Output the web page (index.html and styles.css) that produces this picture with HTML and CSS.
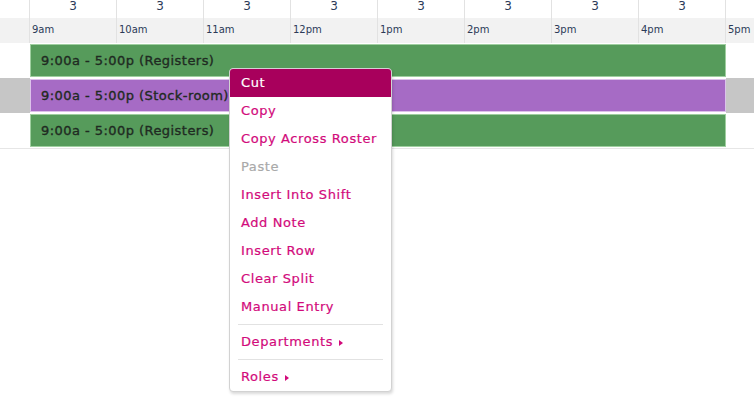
FILE: index.html
```html
<!DOCTYPE html>
<html lang="en">
<head>
  <meta charset="UTF-8">
  <meta name="viewport" content="width=device-width, initial-scale=1.0">
  <title>Roster</title>
  <link rel="stylesheet" href="styles.css">
</head>
<body>
  <div class="roster">
    <div class="row counts">
      <div class="gutter"></div>
      <div class="cell">3</div>
      <div class="cell">3</div>
      <div class="cell">3</div>
      <div class="cell">3</div>
      <div class="cell">3</div>
      <div class="cell">3</div>
      <div class="cell">3</div>
      <div class="cell">3</div>
      <div class="cell tail"></div>
    </div>
    <div class="row hours">
      <div class="gutter"></div>
      <div class="cell">9am</div>
      <div class="cell">10am</div>
      <div class="cell">11am</div>
      <div class="cell">12pm</div>
      <div class="cell">1pm</div>
      <div class="cell">2pm</div>
      <div class="cell">3pm</div>
      <div class="cell">4pm</div>
      <div class="cell tail">5pm</div>
    </div>

    <div class="shift-row">
      <div class="gutter"></div>
      <div class="track"><div class="bar green">9:00a - 5:00p (Registers)</div></div>
      <div class="tail"></div>
    </div>
    <div class="shift-row selected">
      <div class="gutter"></div>
      <div class="track"><div class="bar purple">9:00a - 5:00p (Stock-room)</div></div>
      <div class="tail"></div>
    </div>
    <div class="shift-row">
      <div class="gutter"></div>
      <div class="track"><div class="bar green">9:00a - 5:00p (Registers)</div></div>
      <div class="tail"></div>
    </div>
  </div>

  <ul class="menu">
    <li class="active">Cut</li>
    <li>Copy</li>
    <li>Copy Across Roster</li>
    <li class="disabled">Paste</li>
    <li>Insert Into Shift</li>
    <li>Add Note</li>
    <li>Insert Row</li>
    <li>Clear Split</li>
    <li>Manual Entry</li>
    <li class="sep"></li>
    <li class="sub">Departments</li>
    <li class="sep"></li>
    <li class="sub">Roles</li>
  </ul>
</body>
</html>
```

FILE: styles.css
```css
body {
  margin: 0;
  background: #fff;
  font-family: 'DejaVu Sans', sans-serif;
  overflow: hidden;
}
.roster {
  width: 754px;
}
.row {
  display: flex;
}
.gutter {
  flex: 0 0 29px;
}
.cell {
  flex: 0 0 86px;
  border-left: 1px solid #e2e2e2;
}
.cell.tail {
  flex: 1;
}
.counts {
  height: 18px;
  line-height: 12px;
  font-size: 12px;
  color: #2b3a58;
  text-align: center;
}
.hours {
  height: 25px;
  background: #f2f2f2;
  font-size: 10px;
  color: #2b3a58;
}
.hours .cell {
  padding-left: 2px;
  flex-basis: 84px;
  line-height: 23px;
}
.hours .cell.tail {
  flex: 1;
}
.shift-row {
  display: flex;
  height: 35px;
}
.shift-row:last-child {
  border-bottom: 1px solid #e6e6e6;
}
.shift-row .gutter {
  flex: 0 0 30px;
}
.track {
  flex: 0 0 696px;
  padding: 1px 0;
  box-sizing: border-box;
}
.shift-row .tail {
  flex: 1;
}
.selected .gutter, .selected .tail {
  background: #c6c6c6;
}
.bar {
  height: 100%;
  box-sizing: border-box;
  padding-left: 10px;
  font-size: 13px;
  letter-spacing: 0.45px;
  -webkit-text-stroke: 0.35px #1f2a22;
  color: #1f2a22;
  line-height: 31px;
  white-space: nowrap;
  overflow: hidden;
}
.green {
  background: #569b5b;
  border: 1px solid #9fcfa0;
}
.purple {
  background: #a66bc5;
  border: 1px solid #dcc2ea;
}
.menu {
  position: absolute;
  left: 229px;
  top: 68px;
  width: 161px;
  margin: 0;
  padding: 0;
  list-style: none;
  background: #fff;
  border: 1px solid #d2d2d2;
  border-radius: 4px;
  box-shadow: 1px 2px 3px rgba(0, 0, 0, 0.15);
}
.menu li {
  height: 28px;
  line-height: 28px;
  padding-left: 11px;
  font-size: 13px;
  letter-spacing: 0.6px;
  -webkit-text-stroke: 0.2px currentColor;
  color: #d20a7b;
  white-space: nowrap;
}
.menu li.active {
  background: #a8005c;
  color: #fff;
  border-radius: 3px 3px 0 0;
}
.menu li.disabled {
  color: #a9a9a9;
}
.menu li.sep {
  height: 1px;
  margin: 3px 8px;
  padding: 0;
  background: #e2e2e2;
}
.menu li.sub::after {
  content: "";
  display: inline-block;
  margin-left: 6px;
  border-left: 4px solid #d20a7b;
  border-top: 3.5px solid transparent;
  border-bottom: 3.5px solid transparent;
  vertical-align: middle;
}
```
